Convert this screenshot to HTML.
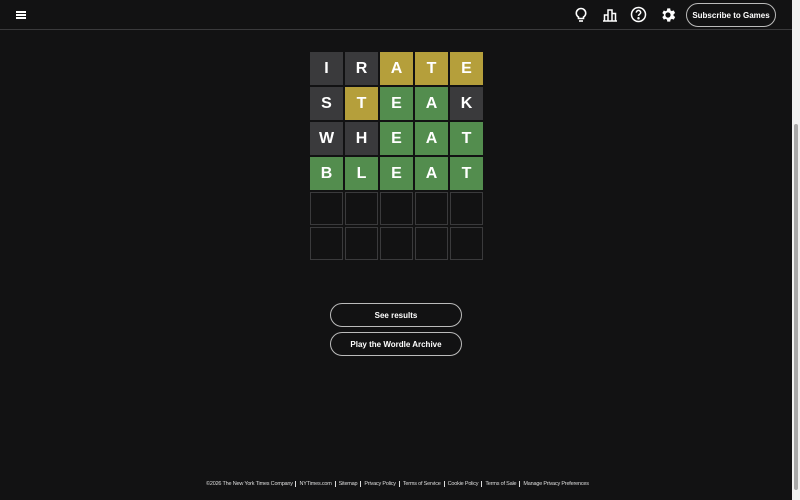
<!DOCTYPE html>
<html><head><style>
*{margin:0;padding:0;box-sizing:border-box}
body{width:800px;height:500px;background:#121213;font-family:"Liberation Sans",sans-serif;color:#fff;position:relative;overflow:hidden}
.hdr{position:absolute;left:0;top:0;width:792px;height:30px;border-bottom:1px solid #3a3a3c}
.tile{position:absolute;width:33px;height:33px;display:flex;align-items:center;justify-content:center;font-weight:bold;font-size:16px;color:#fff}
.g{background:#538d4e}.y{background:#b59f3b}.d{background:#3a3a3c}.e{border:1px solid #3a3a3c}
.btn{position:absolute;left:330px;width:132px;height:24px;border:1px solid #bbb;border-radius:12px;font-size:8px;font-weight:bold;display:flex;align-items:center;justify-content:center}
.ft{position:absolute;top:481px;left:206px;font-size:5.5px;color:#ddd;white-space:nowrap;letter-spacing:-0.2px}
.ft span{border-left:1px solid #ddd;padding:0 3px;}
.sb{position:absolute;left:792px;top:0;width:8px;height:500px;background:#f1f1f1}
.th{position:absolute;left:794px;top:124px;width:4px;height:366px;background:#a8a8a8;border-radius:2px}
</style></head><body>
<div class="hdr"></div>
<div style="position:absolute;left:16px;top:11px;width:10px;height:2px;background:#fff;box-shadow:0 3px 0 #fff,0 6px 0 #fff"></div>
<svg style="position:absolute;left:573px;top:7px" width="16" height="16" viewBox="0 0 16 16" fill="none" stroke="#fff" stroke-width="1.6"><path d="M5.5 11.5v-1.5C4 9 3.3 7.7 3.3 6.2a4.7 4.7 0 019.4 0c0 1.5-.7 2.8-2.2 3.8v1.5z"/><path d="M6 14h4"/></svg>
<svg style="position:absolute;left:602px;top:7px" width="16" height="16" viewBox="0 0 16 16" fill="none" stroke="#fff" stroke-width="1.5"><path d="M1 14h14M2.5 14V8h3.5v6M6 14V3h4v11M10 14V6.5h3.5V14"/></svg>
<svg style="position:absolute;left:630px;top:6px" width="17" height="17" viewBox="0 0 17 17" fill="none" stroke="#fff" stroke-width="1.5"><circle cx="8.5" cy="8.5" r="7"/><path d="M6.3 6.6a2.2 2.2 0 114.4 0c0 1.5-2.2 1.7-2.2 3.3"/><circle cx="8.5" cy="12.3" r=".5" fill="#fff"/></svg>
<svg style="position:absolute;left:659px;top:6px" width="18" height="18" viewBox="0 0 24 24" fill="#fff"><path d="M19.4 13a7.5 7.5 0 000-2l2.1-1.6-2-3.5-2.5 1a7.4 7.4 0 00-1.7-1L15 3.2h-4L10.6 6a7.4 7.4 0 00-1.7 1l-2.5-1-2 3.5L6.5 11a7.5 7.5 0 000 2l-2.1 1.6 2 3.5 2.5-1c.5.4 1.1.7 1.7 1l.4 2.7h4l.4-2.7c.6-.3 1.2-.6 1.7-1l2.5 1 2-3.5zM12 15.5a3.5 3.5 0 110-7 3.5 3.5 0 010 7z"/></svg>
<div style="position:absolute;left:686px;top:3px;width:90px;height:24px;border:1px solid #bbb;border-radius:12px;font-size:8px;font-weight:bold;display:flex;align-items:center;justify-content:center">Subscribe to Games</div>

<div class="tile d" style="left:310px;top:52px">I</div><div class="tile d" style="left:345px;top:52px">R</div><div class="tile y" style="left:380px;top:52px">A</div><div class="tile y" style="left:415px;top:52px">T</div><div class="tile y" style="left:450px;top:52px">E</div>
<div class="tile d" style="left:310px;top:87px">S</div><div class="tile y" style="left:345px;top:87px">T</div><div class="tile g" style="left:380px;top:87px">E</div><div class="tile g" style="left:415px;top:87px">A</div><div class="tile d" style="left:450px;top:87px">K</div>
<div class="tile d" style="left:310px;top:122px">W</div><div class="tile d" style="left:345px;top:122px">H</div><div class="tile g" style="left:380px;top:122px">E</div><div class="tile g" style="left:415px;top:122px">A</div><div class="tile g" style="left:450px;top:122px">T</div>
<div class="tile g" style="left:310px;top:157px">B</div><div class="tile g" style="left:345px;top:157px">L</div><div class="tile g" style="left:380px;top:157px">E</div><div class="tile g" style="left:415px;top:157px">A</div><div class="tile g" style="left:450px;top:157px">T</div>
<div class="tile e" style="left:310px;top:192px"></div><div class="tile e" style="left:345px;top:192px"></div><div class="tile e" style="left:380px;top:192px"></div><div class="tile e" style="left:415px;top:192px"></div><div class="tile e" style="left:450px;top:192px"></div>
<div class="tile e" style="left:310px;top:227px"></div><div class="tile e" style="left:345px;top:227px"></div><div class="tile e" style="left:380px;top:227px"></div><div class="tile e" style="left:415px;top:227px"></div><div class="tile e" style="left:450px;top:227px"></div>

<div class="btn" style="top:303px">See results</div>
<div class="btn" style="top:332px">Play the Wordle Archive</div>

<div class="ft">©2026 The New York Times Company&nbsp; <span>NYTimes.com</span><span>Sitemap</span><span>Privacy Policy</span><span>Terms of Service</span><span>Cookie Policy</span><span>Terms of Sale</span><span>Manage Privacy Preferences</span></div>
<div class="sb"></div><div class="th"></div>
</body></html>
